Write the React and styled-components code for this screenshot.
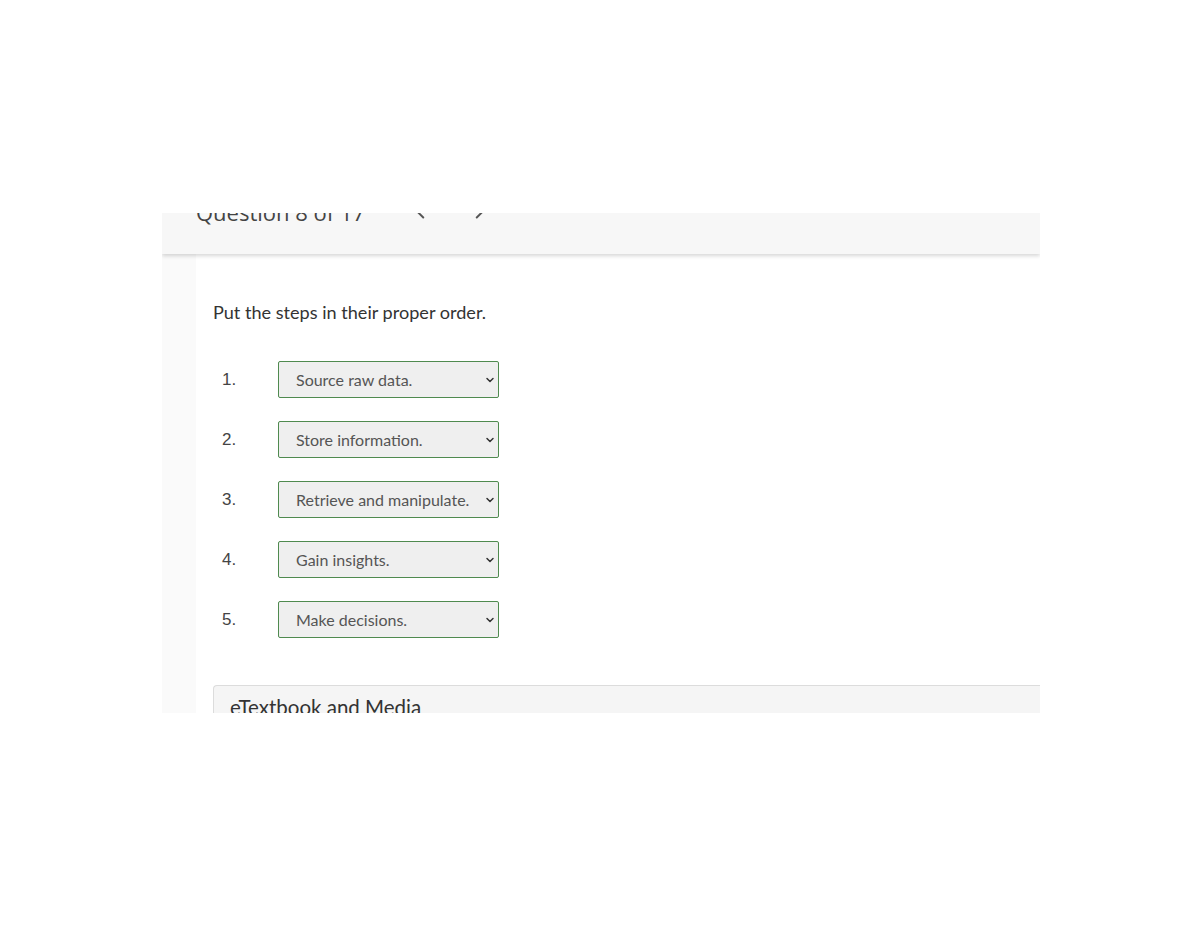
import React from 'react';
import styled, { createGlobalStyle } from 'styled-components';
import { ChevronLeft, ChevronRight, ChevronDown } from 'lucide-react';

const GlobalStyle = createGlobalStyle`
	html, body {
		margin: 0;
		padding: 0;
		background: #ffffff;
	}
	body {
		font-family: Lato, "Open Sans", "Liberation Sans", sans-serif;
	}
`;

const Page = styled.div`
	width: 1200px;
	height: 927px;
	padding: 213px 0 0 162px;
	box-sizing: border-box;
`;

const Shot = styled.div`
	width: 878px;
	height: 500px;
	overflow: hidden;
	display: flex;
	flex-direction: column;
	background: #ffffff;
`;

const Header = styled.div`
	height: 41px;
	flex: none;
	background: #f7f7f7;
	box-shadow: 0 2px 4px rgba(0, 0, 0, 0.16);
	display: flex;
	align-items: flex-start;
	padding-left: 34px;
	position: relative;
	z-index: 1;
`;

const Title = styled.div`
	font-family: "Open Sans", Lato, sans-serif;
	font-size: 22px;
	line-height: 22px;
	margin-top: -12px;
	color: #444;
	white-space: nowrap;
`;

const NavButton = styled.span`
	display: flex;
	color: #555;
	margin-top: -15px;
	margin-left: ${p => p.$gap}px;
`;

const Body = styled.div`
	flex: 1;
	display: flex;
`;

const Gutter = styled.div`
	width: 34px;
	flex: none;
	background: #fafafa;
`;

const Main = styled.div`
	flex: 1;
	padding: 46px 0 0 17px;
`;

const Prompt = styled.p`
	margin: 0 0 37px;
	font-size: 18.1px;
	line-height: 24px;
	color: #333;
`;

const Steps = styled.div`
	display: flex;
	flex-direction: column;
	gap: 23px;
	padding-left: 9px;
`;

const Step = styled.div`
	display: flex;
	align-items: center;
	height: 37px;
`;

const Num = styled.span`
	width: 56px;
	font-family: "Liberation Sans", Arial, sans-serif;
	font-size: 17px;
	color: #444;
`;

const SelectWrap = styled.div`
	position: relative;
	width: 221px;
	height: 37px;
`;

const Select = styled.select`
	appearance: none;
	width: 100%;
	height: 100%;
	box-sizing: border-box;
	border: 1px solid #4f8a4f;
	border-radius: 2px;
	background: #efefef;
	padding: 0 24px 0 17px;
	font-family: Lato, sans-serif;
	font-size: 16px;
	color: #555;
	outline: none;
`;

const Caret = styled.span`
	position: absolute;
	right: 3px;
	top: 50%;
	transform: translateY(-50%);
	display: flex;
	color: #333;
	pointer-events: none;
`;

const Media = styled.div`
	margin-top: 47px;
	border: 1px solid #dcdcdc;
	border-right: none;
	border-radius: 4px 0 0 0;
	background: #f5f5f5;
	padding: 9px 0 0 16px;
	height: 60px;
	font-size: 20.5px;
	line-height: 25px;
	color: #333;
`;

const options = [
	'Source raw data.',
	'Store information.',
	'Retrieve and manipulate.',
	'Gain insights.',
	'Make decisions.',
];

const App = () => {
	return (
		<>
			<GlobalStyle />
			<Page>
				<Shot>
					<Header>
						<Title>Question 8 of 17</Title>
						<NavButton $gap={42}><ChevronLeft size={26} strokeWidth={1.8} /></NavButton>
						<NavButton $gap={34}><ChevronRight size={26} strokeWidth={1.8} /></NavButton>
					</Header>
					<Body>
						<Gutter />
						<Main>
							<Prompt>Put the steps in their proper order.</Prompt>
							<Steps>
								{options.map((opt, i) => (
									<Step key={opt}>
										<Num>{i + 1}.</Num>
										<SelectWrap>
											<Select defaultValue={opt}>
												{options.map(o => <option key={o} value={o}>{o}</option>)}
											</Select>
											<Caret><ChevronDown size={12} strokeWidth={3} /></Caret>
										</SelectWrap>
									</Step>
								))}
							</Steps>
							<Media>eTextbook and Media</Media>
						</Main>
					</Body>
				</Shot>
			</Page>
		</>
	);
};

export default App;
